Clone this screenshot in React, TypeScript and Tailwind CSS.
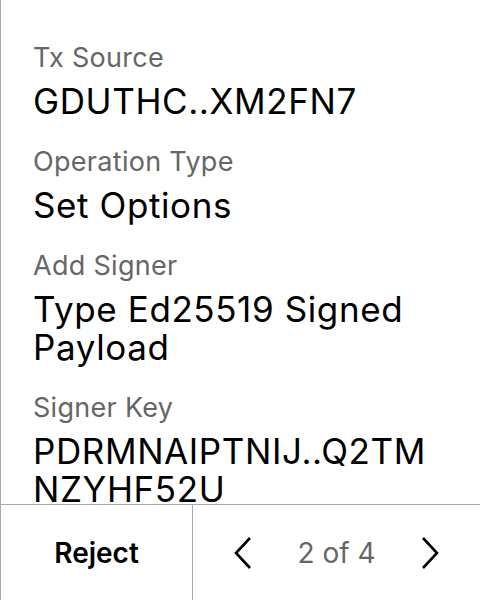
import React from "react";

const FIELDS = [
  { label: "Tx Source", value: "GDUTHC..XM2FN7" },
  { label: "Operation Type", value: "Set Options" },
  { label: "Add Signer", value: "Type Ed25519 Signed Payload" },
  { label: "Signer Key", value: "PDRMNAIPTNIJ..Q2TMNZYHF52U" },
];

function Chevron({ dir }: { dir: "left" | "right" }) {
  return (
    <svg width="20" height="34" viewBox="0 0 20 34" fill="none" aria-hidden="true">
      <path
        d={dir === "left" ? "M17 2 L3 17 L17 32" : "M3 2 L17 17 L3 32"}
        stroke="#000"
        strokeWidth="2.6"
      />
    </svg>
  );
}

export default function App() {
  return (
    <div
      className="h-[600px] w-[480px] flex flex-col bg-white border-l border-[#aaa]"
      style={{ fontFamily: "Inter, sans-serif" }}
    >
      <div className="flex-1 overflow-hidden pl-[32px] pr-[36px] pt-[41px]">
        {FIELDS.map((f) => (
          <div key={f.label} className="mb-[25px]">
            <div className="text-[27px] leading-[34px] tracking-[0.3px] text-[#666]">{f.label}</div>
            <div className="mt-[7px] text-[35px] leading-[38px] tracking-[0.6px] text-black [overflow-wrap:anywhere]">
              {f.value}
            </div>
          </div>
        ))}
      </div>
      <div className="h-[96px] shrink-0 flex border-t border-[#aaa]">
        <button className="w-[192px] border-r border-[#aaa] text-[28px] font-semibold text-black">
          Reject
        </button>
        <div className="flex-1 flex items-center justify-between px-[40px]">
          <Chevron dir="left" />
          <span className="text-[28px] text-[#666]">2 of 4</span>
          <Chevron dir="right" />
        </div>
      </div>
    </div>
  );
}
